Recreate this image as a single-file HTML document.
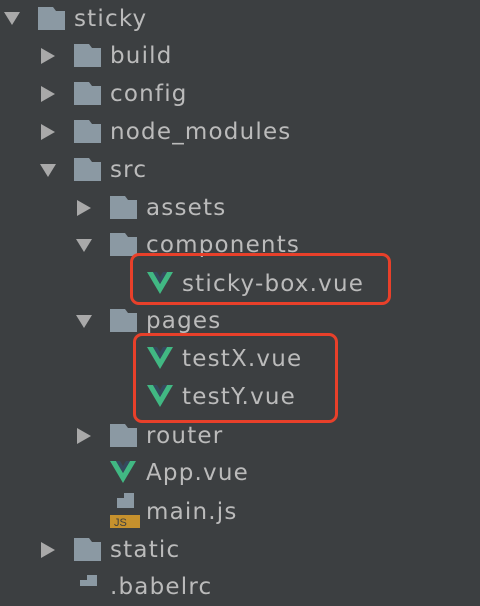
<!DOCTYPE html>
<html><head><style>
body{margin:0;width:480px;height:586px;background:#3c3f41;overflow:hidden;position:relative;font-family:"DejaVu Sans",sans-serif}
.r{position:absolute;height:38px;line-height:38px;font-size:23px;letter-spacing:1.2px;color:#bbbbbb;white-space:nowrap;margin-top:1px}
svg{position:absolute}
.box{position:absolute;border:3.5px solid #e8402a;border-radius:9px;box-sizing:border-box}
</style></head><body>
<svg width="480" height="586" style="left:0;top:0">
<defs>
<path id="f" d="M0 0H15L18 4H27V23H0Z" fill="#8b99a3"/>
<path id="ad" d="M0 0H16L8 13Z" fill="#a9a9a9"/>
<path id="ar" d="M0 0L14 8L0 16Z" fill="#a9a9a9"/>
<g id="v"><path d="M0 0H6L13 12L20 0H26L13 22Z" fill="#41b883"/><path d="M6 0H10L13 5L16 0H20L13 12Z" fill="#35495e"/></g>
</defs>
<use href="#ad" x="4" y="12"/><use href="#f" x="38" y="7"/>
<use href="#ar" x="41" y="48"/><use href="#f" x="74" y="44"/>
<use href="#ar" x="41" y="86"/><use href="#f" x="74" y="82"/>
<use href="#ar" x="41" y="124"/><use href="#f" x="74" y="120"/>
<use href="#ad" x="40" y="164"/><use href="#f" x="74" y="158"/>
<use href="#ar" x="77" y="200"/><use href="#f" x="110" y="196"/>
<use href="#ad" x="76" y="239"/><use href="#f" x="110" y="233"/>
<use href="#v" x="147" y="272"/>
<use href="#ad" x="76" y="315"/><use href="#f" x="110" y="309"/>
<use href="#v" x="147" y="347"/>
<use href="#v" x="147" y="385"/>
<use href="#ar" x="77" y="428"/><use href="#f" x="110" y="424"/>
<use href="#v" x="110" y="461"/>
<path d="M117 498H124V493H134V508H117Z" fill="#8b99a3"/>
<rect x="110" y="515" width="30" height="13" fill="#c6912d"/>
<text x="114" y="526" font-family="Liberation Sans" font-size="11" fill="#3c3f41">JS</text>
<use href="#ar" x="41" y="542"/><use href="#f" x="74" y="538"/>
<path d="M80 580H87V575H97V590H80Z" fill="#8b99a3"/>
</svg>
<div class="r" style="left:74px;top:-1px">sticky</div>
<div class="r" style="left:110px;top:36px">build</div>
<div class="r" style="left:110px;top:74px">config</div>
<div class="r" style="left:110px;top:112px">node_modules</div>
<div class="r" style="left:110px;top:150px">src</div>
<div class="r" style="left:146px;top:188px">assets</div>
<div class="r" style="left:146px;top:225px">components</div>
<div class="r" style="left:182px;top:264px">sticky-box.vue</div>
<div class="r" style="left:146px;top:301px">pages</div>
<div class="r" style="left:182px;top:339px">testX.vue</div>
<div class="r" style="left:182px;top:377px">testY.vue</div>
<div class="r" style="left:146px;top:416px">router</div>
<div class="r" style="left:146px;top:453px">App.vue</div>
<div class="r" style="left:146px;top:492px">main.js</div>
<div class="r" style="left:110px;top:530px">static</div>
<div class="r" style="left:110px;top:567px">.babelrc</div>
<div class="box" style="left:130px;top:253px;width:261px;height:52px"></div>
<div class="box" style="left:133px;top:333px;width:205px;height:90px"></div>
</body></html>
